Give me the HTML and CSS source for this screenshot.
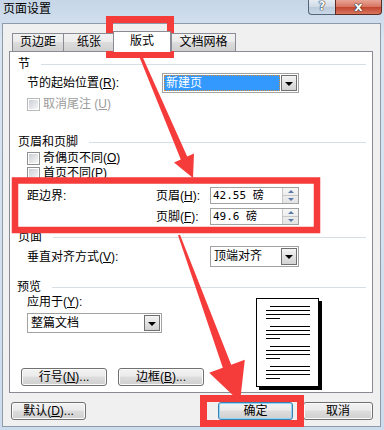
FILE: index.html
```html
<!DOCTYPE html>
<html>

<head>
    <title>页面设置</title>
    <link rel="stylesheet" href="styles.css">
</head>

<body>
    <div class="window">
        <div class="titlebar">
            <span class="title">页面设置</span>
            <div class="caption-buttons">
                <span class="cap-btn help">?</span>
                <span class="cap-btn close">x</span>
            </div>
        </div>

        <div class="client">
            <div class="tabs">
                <span class="tab tab-margin">页边距</span>
                <span class="tab tab-paper">纸张</span>
                <span class="tab tab-layout active">版式</span>
                <span class="tab tab-grid">文档网格</span>
            </div>

            <div class="panel">
                <div class="group-head">节</div>
                <div class="row row-start">
                    <span class="label label-start">节的起始位置(<u>R</u>):</span>
                    <div class="select select-start focused">
                        <span class="value">新建页</span>
                        <span class="dd-btn"><span class="tri"></span></span>
                    </div>
                </div>
                <div class="row check-row disabled first-check">
                    <span class="checkbox"></span>
                    <span>取消尾注 (<u>U</u>)</span>
                </div>

                <div class="group-head head-hf">页眉和页脚</div>
                <div class="row check-row">
                    <span class="checkbox"></span>
                    <span>奇偶页不同(<u>O</u>)</span>
                </div>
                <div class="row check-row">
                    <span class="checkbox"></span>
                    <span>首页不同(<u>P</u>)</span>
                </div>
                <div class="row spin-row spin-first">
                    <span class="label label-edge">距边界:</span>
                    <span class="label label-hf">页眉(<u>H</u>):</span>
                    <div class="spin-input">
                        <span class="num">42.55 磅</span>
                        <span class="spinner"><span class="up"></span><span class="down"></span></span>
                    </div>
                </div>
                <div class="row spin-row">
                    <span class="label label-edge"></span>
                    <span class="label label-hf">页脚(<u>F</u>):</span>
                    <div class="spin-input">
                        <span class="num">49.6 磅</span>
                        <span class="spinner"><span class="up"></span><span class="down"></span></span>
                    </div>
                </div>

                <div class="group-head head-page">页面</div>
                <div class="row row-valign">
                    <span class="label label-valign">垂直对齐方式(<u>V</u>):</span>
                    <div class="select select-valign">
                        <span class="value">顶端对齐</span>
                        <span class="dd-btn"><span class="tri"></span></span>
                    </div>
                </div>

                <div class="group-head head-preview">预览</div>
                <div class="preview-area">
                    <div class="preview-left">
                        <span class="apply-label">应用于(<u>Y</u>):</span>
                        <div class="select select-apply">
                            <span class="value">整篇文档</span>
                            <span class="dd-btn"><span class="tri"></span></span>
                        </div>
                        <div class="side-buttons">
                            <span class="btn btn-side">行号(<u>N</u>)...</span>
                            <span class="btn btn-side">边框(<u>B</u>)...</span>
                        </div>
                    </div>
                    <div class="page">
                        <svg width="61" height="87" viewBox="0 0 61 87">
                            <g stroke="#000" stroke-width="1">
                                <path d="M13 7.5H53M9 11.5H53M9 15.5H53M9 19.5H23" />
                                <path d="M13 27.5H53M9 31.5H53M9 35.5H53M9 39.5H23" />
                                <path d="M13 47.5H53M9 51.5H53M9 55.5H53M9 59.5H23" />
                                <path d="M13 67.5H53M9 71.5H53M9 75.5H53M9 79.5H23" />
                            </g>
                        </svg>
                    </div>
                </div>
            </div>

            <div class="footer">
                <span class="btn btn-default">默认(<u>D</u>)...</span>
                <span class="btn btn-ok">确定</span>
                <span class="btn btn-cancel">取消</span>
            </div>
        </div>

        <!-- red annotation overlay -->
        <svg class="marks" width="384" height="430" viewBox="0 0 384 430">
            <g fill="none" stroke="#f63b3b">
                <rect x="109.5" y="19.5" width="61" height="35" stroke-width="7" />
                <rect x="15" y="180.5" width="302" height="49.5" stroke-width="6.5" />
                <rect x="203.5" y="398.5" width="97" height="25" stroke-width="7" />
            </g>
            <g fill="#f63b3b">
                <polygon points="139.6,57.6 142.4,56.4 187.2,156.6 194,153.5 193,178 174,162.5 180.8,159.4" />
                <polygon points="178,235.3 180,234.7 231.2,364.8 244.8,359.8 240,402 209.2,372.8 222.8,367.8" />
            </g>
        </svg>
    </div>
</body>

</html>
```

FILE: styles.css
```css
body {
    margin: 0;
    font-family: "Liberation Sans", "Noto Sans CJK SC", sans-serif;
    font-size: 12px;
    color: #000;
}

u {
    text-decoration: underline;
}

.window {
    position: relative;
    width: 384px;
    height: 430px;
    background: linear-gradient(#c6d6e7, #d9e5f1 40px, #cddcec);
    display: flex;
    flex-direction: column;
    overflow: hidden;
}

/* title bar */

.titlebar {
    height: 23px;
    display: flex;
    align-items: flex-start;
}

.title {
    padding: 2px 0 0 3px;
    line-height: 14px;
}

.caption-buttons {
    margin-left: auto;
    margin-right: 2px;
    display: flex;
}

.cap-btn {
    height: 15px;
    box-sizing: border-box;
    border: 1px solid #56667a;
    border-top: none;
    text-align: center;
    font-family: "DejaVu Sans", sans-serif;
    font-weight: bold;
    color: #fff;
    line-height: 13px;
    text-shadow: 0 0 1px #1e2a38, 0 0 1px #1e2a38, 0 0 1px #1e2a38;
}

.help {
    width: 28px;
    border-bottom-left-radius: 4px;
    background: linear-gradient(#e6ecf3, #cfdae6 50%, #bccbdc 51%, #c9d7e6);
    font-size: 12px;
}

.close {
    width: 47px;
    margin-left: -1px;
    border-color: #5d2a24;
    border-bottom-right-radius: 4px;
    background: linear-gradient(#e8a596, #d6735f 50%, #c2432e 51%, #d8775e);
    font-size: 13px;
}

/* client area */

.client {
    margin: 0 3px 0 2px;
    height: 402px;
    border: 1px solid #8e9bab;
    background: #f0f0f0;
    display: flex;
    flex-direction: column;
}

.tabs {
    position: relative;
    z-index: 1;
    display: flex;
    align-items: flex-end;
    height: 20px;
    margin-top: 7px;
    padding-left: 9px;
}

.tab {
    box-sizing: border-box;
    height: 18px;
    border: 1px solid #898c95;
    border-bottom: none;
    text-align: center;
    line-height: 16px;
    background: linear-gradient(#f2f2f2, #ebebeb 45%, #dddddd 50%, #cfcfcf);
}

.tab-margin {
    width: 52px;
    margin-right: -1px;
}

.tab-paper {
    width: 52px;
}

.tab.active {
    width: 58px;
    height: 21px;
    margin-left: -2px;
    margin-bottom: -1px;
    background: #fff;
    line-height: 19px;
}

.tab-grid {
    width: 65px;
}

.panel {
    box-sizing: border-box;
    width: 364px;
    height: 342px;
    margin-left: 6px;
    border: 1px solid #898c95;
    background: #fff;
    display: flex;
    flex-direction: column;
    line-height: 14px;
}

.group-head {
    display: flex;
    align-items: center;
    height: 16px;
    padding: 0 6px 0 8px;
    margin-top: 4px;
}

.group-head::after {
    content: "";
    flex: 1;
    height: 1px;
    margin-left: 11px;
    background: #d5dfe5;
}

.head-hf {
    margin-top: 23px;
}

.head-page {
    margin-top: 4px;
}

.head-preview {
    margin-top: 12px;
    padding-left: 7px;
}

.row {
    display: flex;
    align-items: center;
    padding-left: 17px;
}

.row-start {
    height: 20px;
    margin-top: 1px;
}

.label-start {
    width: 135px;
}

.check-row {
    height: 14px;
    margin-top: 1px;
}

.first-check {
    margin-top: 4px;
}

.checkbox {
    box-sizing: border-box;
    width: 13px;
    height: 13px;
    margin-right: 3px;
    border: 1px solid #8e8f8f;
    padding: 1px;
    background: linear-gradient(135deg, #cbcfd5, #f6f6f6) content-box, #fff;
}

.disabled {
    color: #9c9c9c;
}

.disabled .checkbox {
    border-color: #b8b8b8;
    background: #f4f4f4 content-box, #fff;
}

/* combo boxes */

.select {
    box-sizing: border-box;
    display: flex;
    height: 20px;
    border: 1px solid #a2a2a2;
    padding: 1px;
    background: #fff;
}

.select .value {
    flex: 1;
    line-height: 16px;
    padding-left: 2px;
}

.select.focused .value {
    background: #3399ff;
    color: #fff;
    outline: 1px dotted #d08a3a;
    outline-offset: -1px;
}

.select-start {
    width: 137px;
}

.dd-btn {
    box-sizing: border-box;
    width: 16px;
    margin-left: 1px;
    border: 1px solid #707070;
    background: linear-gradient(#f4f4f4, #e2e2e2 50%, #d2d2d2);
    display: flex;
    align-items: center;
    justify-content: center;
}

.tri {
    width: 0;
    height: 0;
    border-left: 4px solid transparent;
    border-right: 4px solid transparent;
    border-top: 4px solid #000;
    margin-top: 1px;
}

/* spin boxes */

.spin-row {
    height: 17px;
    margin-top: 4px;
}

.spin-first {
    margin-top: 7px;
}

.label-edge {
    width: 129px;
}

.label-hf {
    width: 54px;
}

.spin-input {
    box-sizing: border-box;
    width: 89px;
    height: 17px;
    display: flex;
    border: 1px solid #a2a2a2;
}

.num {
    flex: 1;
    padding-left: 2px;
    line-height: 15px;
    font-family: "DejaVu Sans Mono", "Noto Sans CJK SC", monospace;
    font-size: 11px;
}

.spinner {
    width: 15px;
    display: flex;
    flex-direction: column;
    border-left: 1px solid #c6c6c6;
    background: linear-gradient(#f6f6f6, #e4e4e4);
}

.spinner span {
    flex: 1;
    display: flex;
    align-items: center;
    justify-content: center;
}

.spinner .up {
    border-bottom: 1px solid #c6c6c6;
}

.spinner .up::before,
.spinner .down::before {
    content: "";
    border-left: 3px solid transparent;
    border-right: 3px solid transparent;
}

.spinner .up::before {
    border-bottom: 3px solid #5c7aa8;
}

.spinner .down::before {
    border-top: 3px solid #5c7aa8;
}

.row-valign {
    height: 21px;
    margin-top: 1px;
}

.label-valign {
    width: 183px;
}

.select-valign {
    width: 89px;
    height: 21px;
}

/* preview */

.preview-area {
    display: flex;
    padding-left: 11px;
}

.preview-left {
    width: 235px;
    display: flex;
    flex-direction: column;
}

.apply-label {
    height: 14px;
    line-height: 14px;
    margin-left: 6px;
}

.select-apply {
    width: 135px;
    margin: 4px 0 0 6px;
}

.side-buttons {
    display: flex;
    gap: 11px;
    margin-top: 35px;
}

.page {
    box-sizing: border-box;
    width: 63px;
    height: 89px;
    margin-top: 3px;
    border: 1px solid #000;
    background: #fff;
    box-shadow: 3px 3px 0 #000;
}

.page svg {
    display: block;
}

/* buttons */

.btn {
    box-sizing: border-box;
    height: 18px;
    border: 1px solid #707070;
    border-radius: 3px;
    background: linear-gradient(#f2f2f2, #ebebeb 45%, #dddddd 50%, #cfcfcf);
    box-shadow: inset 0 0 0 1px #fbfbfb;
    text-align: center;
    line-height: 16px;
}

.btn-side {
    width: 86px;
}

.footer {
    display: flex;
    padding: 9px 0 0 8px;
}

.btn-default {
    width: 75px;
}

.btn-ok {
    width: 75px;
    margin-left: 132px;
    border-color: #3c7fb1;
    box-shadow: inset 0 0 0 1px #8fd6f8;
}

.btn-cancel {
    width: 70px;
    margin-left: 10px;
}

/* annotation */

.marks {
    position: absolute;
    left: 0;
    top: 0;
    pointer-events: none;
}
```
